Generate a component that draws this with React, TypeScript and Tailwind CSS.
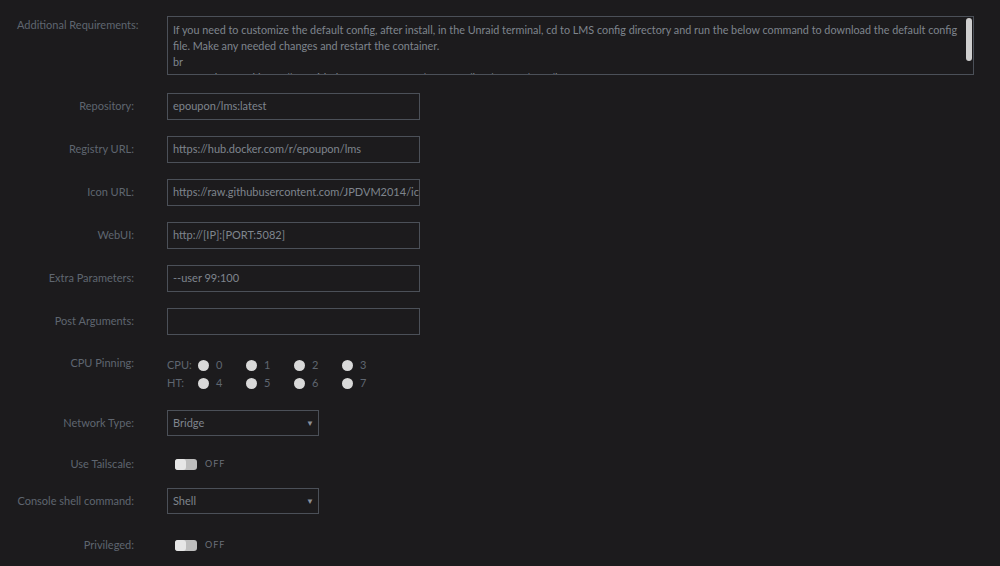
import React from "react";

const font = { fontFamily: "Lato, 'Noto Sans', sans-serif" };

function Label({ children }: { children: React.ReactNode }) {
  return <div className="w-[134px] shrink-0 text-right whitespace-nowrap text-[#5f6670]">{children}</div>;
}

function TextRow({ label, value }: { label: string; value: string }) {
  return <div className="flex items-center h-[43px] gap-[33px]">
    <Label>{label}</Label>
    <div className="w-[253px] h-[27px] border border-[#4b5058] px-[5px] flex items-center text-[#7f858d] overflow-hidden whitespace-nowrap">
      {value}
    </div>
  </div>;
}

function Select({ value }: { value: string }) {
  return <div className="w-[152px] h-[26px] border border-[#4b5058] pl-[5px] pr-[4px] flex items-center justify-between text-[#7f858d]">
    <span>{value}</span>
    <span className="text-[8px] text-[#8a9099]">▼</span>
  </div>;
}

function Toggle() {
  return <div className="flex items-center gap-[8px] pl-[8px]">
    <div className="w-[22px] h-[11px] rounded-[3px] bg-[#bdbdbd] flex">
      <div className="w-[11px] h-[11px] rounded-[3px] bg-[#e6e6e6]" />
    </div>
    <span className="text-[9px] tracking-[1px] text-[#6b7078]">OFF</span>
  </div>;
}

function Core({ n }: { n: number }) {
  return <div className="w-[48px] flex items-center">
    <div className="w-[11px] h-[11px] rounded-full bg-[#d9d9d9]" />
    <span className="ml-[7px] text-[#5f6670]">{n}</span>
  </div>;
}

export default function App() {
  return <div className="min-h-screen bg-[#1c1b1d] text-[11px] pt-[16px]" style={font}>
    <div className="flex gap-[33px]">
      <div className="w-[134px] shrink-0 pl-[17px] pt-[1px] whitespace-nowrap text-[#5f6670]">Additional Requirements:</div>
      <div className="relative w-[807px] h-[59px] border border-[#4b5058] overflow-hidden">
        <div className="pl-[5px] pr-[12px] pt-[5px] text-[10.8px] leading-[16px] text-[#7f858d]">
          If you need to customize the default config, after install, in the Unraid terminal, cd to LMS config directory and run the below command to download the default config file. Make any needed changes and restart the container.<br />
          br<br />
          wget -O lms.yaml https://raw.githubusercontent.com/epoupon/lms/master/conf/lms.conf
        </div>
        <div className="absolute right-[1px] top-[1px] w-[6px] h-[43px] rounded-[3px] bg-[#cfcfcf]" />
      </div>
    </div>
    <div className="mt-[10px]">
      <TextRow label="Repository:" value="epoupon/lms:latest" />
      <TextRow label="Registry URL:" value="https://hub.docker.com/r/epoupon/lms" />
      <TextRow label="Icon URL:" value="https://raw.githubusercontent.com/JPDVM2014/icons/master/lms.png" />
      <TextRow label="WebUI:" value="http://[IP]:[PORT:5082]" />
      <TextRow label="Extra Parameters:" value="--user 99:100" />
      <TextRow label="Post Arguments:" value="" />
    </div>
    <div className="flex gap-[33px] mt-[13px]">
      <div className="w-[134px] shrink-0 text-right text-[#5f6670] leading-[14px]">CPU Pinning:</div>
      <div className="flex flex-col text-[#5f6670]">
        <div className="flex items-center h-[18px]">
          <span className="w-[31px]">CPU:</span>
          {[0, 1, 2, 3].map(n => <Core key={n} n={n} />)}
        </div>
        <div className="flex items-center h-[18px]">
          <span className="w-[31px]">HT:</span>
          {[4, 5, 6, 7].map(n => <Core key={n} n={n} />)}
        </div>
      </div>
    </div>
    <div className="flex items-center gap-[33px] h-[26px] mt-[18px]">
      <Label>Network Type:</Label>
      <Select value="Bridge" />
    </div>
    <div className="flex items-center gap-[33px] h-[26px] mt-[15px]">
      <Label>Use Tailscale:</Label>
      <Toggle />
    </div>
    <div className="flex items-center gap-[33px] h-[26px] mt-[11px]">
      <Label>Console shell command:</Label>
      <Select value="Shell" />
    </div>
    <div className="flex items-center gap-[33px] h-[26px] mt-[18px]">
      <Label>Privileged:</Label>
      <Toggle />
    </div>
  </div>;
}
